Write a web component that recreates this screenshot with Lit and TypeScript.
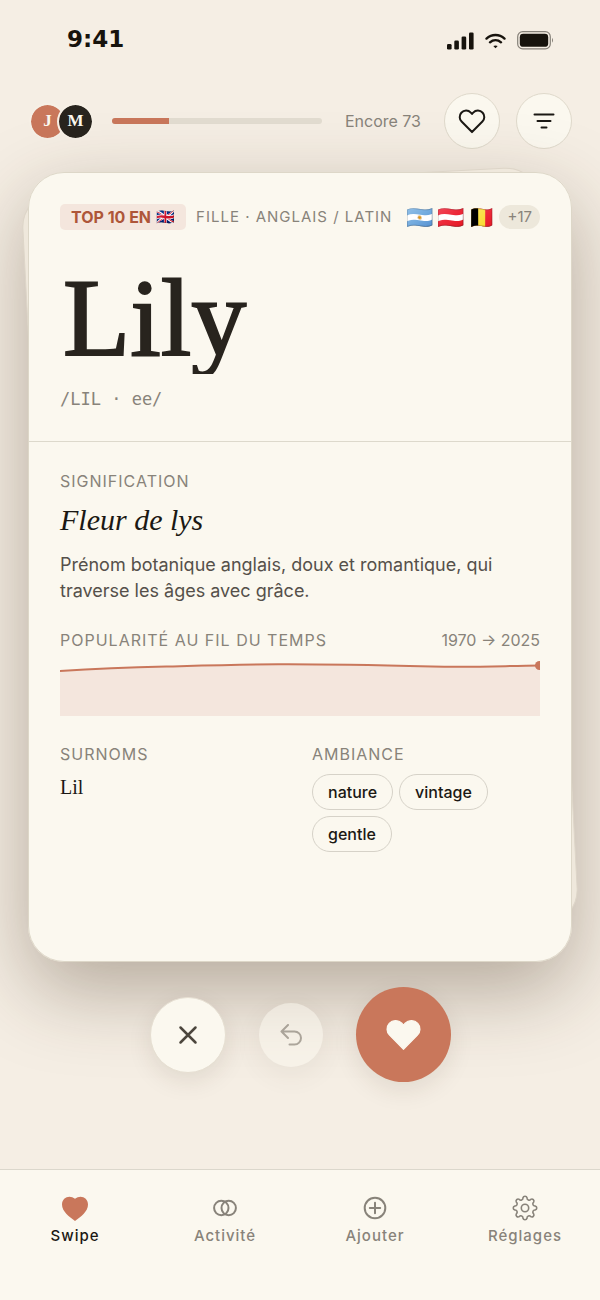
import { LitElement, html, css, svg } from "lit";
import { customElement, property } from "lit/decorators.js";

const heart = svg`<path d="M12 20.3 4.2 12.4C2.4 10.6 2.3 7.7 4 5.8 5.9 3.7 9.2 3.7 11.1 5.7L12 6.7 12.9 5.7C14.8 3.7 18.1 3.7 20 5.8 21.7 7.7 21.6 10.6 19.8 12.4Z" />`;

// Outline of a gear with eight rounded teeth, centred on (14, 14).
function gearPath(): string {
  const radius = 10.4;
  const step = Math.PI / 8;
  const point = (i: number) => {
    const a = -Math.PI / 2 - step / 2 + i * step;
    return `${(14 + radius * Math.cos(a)).toFixed(2)} ${(14 + radius * Math.sin(a)).toFixed(2)}`;
  };
  let d = `M${point(0)}`;
  for (let i = 1; i <= 16; i++) d += `A2.1 2.1 0 0 ${i % 2} ${point(i)}`;
  return d + "Z";
}

const nameCard = {
  name: "Lily",
  sound: "/LIL · ee/",
  meaning: "Fleur de lys",
  about: "Prénom botanique anglais, doux et romantique, qui traverse les âges avec grâce.",
  flags: ["🇦🇷", "🇦🇹", "🇧🇪"],
  nicknames: ["Lil"],
  moods: ["nature", "vintage", "gentle"],
};

const shared = css`
  * { box-sizing: border-box; margin: 0; }
  svg { display: block; fill: none; stroke: currentColor; stroke-linecap: round; stroke-linejoin: round; }
  button { font: inherit; color: inherit; padding: 0; cursor: pointer; }
`;

@customElement("status-bar")
export class StatusBar extends LitElement {
  static styles = [shared, css`
    :host { display: flex; align-items: center; justify-content: space-between; padding: 24px 46px 0 67px; color: #17130d; }
    .time { font: 700 23px/30px "DejaVu Sans", sans-serif; }
    .signals { display: flex; align-items: center; gap: 11px; padding-top: 3px; }
    .solid { fill: currentColor; stroke: none; }
  `];
  render() {
    return html`
      <span class="time">9:41</span>
      <div class="signals">
        <svg class="solid" width="27" height="18" viewBox="0 0 27 18">
          <rect x="0" y="12" width="4.6" height="5.5" rx="1.3" />
          <rect x="7.3" y="8.5" width="4.6" height="9" rx="1.3" />
          <rect x="14.6" y="4.5" width="4.6" height="13" rx="1.3" />
          <rect x="22" y="0.5" width="4.6" height="17" rx="1.3" />
        </svg>
        <svg width="21" height="16" viewBox="0 0 21 16" stroke-width="2.4">
          <path d="M1.5 5.6C6.6 0.8 14.4 0.8 19.5 5.6M5 9.3C8.2 6.4 12.8 6.4 16 9.3" />
          <path class="solid" d="M8.3 13Q10.5 11.8 12.7 13L10.5 15.2Z" />
        </svg>
        <svg width="37" height="19" viewBox="0 0 37 19">
          <rect x="0.7" y="0.7" width="32.6" height="17.2" rx="5" stroke-width="1.2" opacity=".5" />
          <rect class="solid" x="2.8" y="2.8" width="28.4" height="13" rx="3.4" />
          <path class="solid" d="M35 6.8Q37 9.3 35 11.8Z" opacity=".5" />
        </svg>
      </div>`;
  }
}

@customElement("deck-header")
export class DeckHeader extends LitElement {
  @property({ type: Number }) seen = 27;
  static styles = [shared, css`
    :host { display: flex; align-items: center; padding: 0 28px 0 29px; }
    .pair { display: flex; margin-right: 18px; }
    .avatar { width: 37px; height: 37px; border: 2px solid #f6f0e6; border-radius: 50%; display: grid; place-items: center; background: #c9775b; color: #fbf8ef; font: 700 17px/20px "Liberation Serif", serif; background-clip: padding-box; }
    .avatar + .avatar { margin-left: -9px; background-color: #28241e; }
    .track { flex: 1; height: 6px; border-radius: 3px; background: #e2dcd0; overflow: hidden; }
    .fill { height: 100%; background: #c9775b; }
    .left { margin: 0 23px; font-size: 16px; line-height: 24px; color: #88837a; }
    .round { width: 56px; height: 56px; border: 1px solid #dfd9cb; border-radius: 50%; background: #fbf8ef; display: grid; place-items: center; color: #1b1814; }
    .round + .round { margin-left: 16px; }
  `];
  render() {
    return html`
      <div class="pair"><span class="avatar">J</span><span class="avatar">M</span></div>
      <div class="track" role="progressbar" aria-valuenow=${this.seen} aria-label="Progression"><div class="fill" style="width:${this.seen}%"></div></div>
      <span class="left">Encore 73</span>
      <button class="round" aria-label="Favoris"><svg width="32" height="32" viewBox="0 0 24 24" stroke-width="1.5">${heart}</svg></button>
      <button class="round" aria-label="Filtres"><svg width="22" height="16" viewBox="0 0 22 16" stroke-width="2"><path d="M1.5 1.5H20.5M4.5 8H17.5M8.5 14.5H13.5" /></svg></button>`;
  }
}

@customElement("name-card")
export class NameCard extends LitElement {
  static styles = [shared, css`
    :host { display: flex; position: relative; flex: 1; }
    .shade { position: absolute; inset: 0; border-radius: 36px; box-shadow: 0 28px 80px rgba(60, 40, 20, 0.35); }
    .under { position: absolute; inset: 7px 12px 24px; border-radius: 36px; border: 1px solid #ddd5c8; background: #efe8dc; transform: rotate(-3deg); }
    .card { position: relative; flex: 1; border: 1px solid #ddd7c8; border-radius: 36px; background: #fbf8ef; }
    .top { padding: 31px 31px 29px; border-bottom: 1px solid #ddd9cc; }
    .facts { display: flex; align-items: center; height: 26px; color: #88837a; }
    .badge { display: flex; align-items: center; gap: 5px; padding: 0 11px; height: 26px; border-radius: 5px; background: #f4e6dd; color: #ae5639; font-size: 16px; line-height: 26px; font-weight: 700; white-space: nowrap; }
    .mini { font-size: 15px; }
    .kind { margin-left: 10px; font-size: 15px; line-height: 26px; letter-spacing: 1px; white-space: nowrap; }
    .flags { display: flex; margin-left: auto; gap: 4px; font-size: 22px; line-height: 26px; }
    .more { margin-left: 4px; padding: 0 8px; border-radius: 12px; background: #ede8db; font-size: 15px; line-height: 24px; }
    h1 { margin-top: 32px; padding-left: 3px; font: 400 110px/112px "Liberation Serif", serif; color: #28241e; -webkit-text-stroke: 2px #28241e; overflow: hidden; }
    .sound { margin-top: 12px; font: 17px/26px "DejaVu Sans Mono", monospace; color: #88837a; }
    .body { padding: 27px 31px; }
    h2 { font-size: 16px; line-height: 24px; font-weight: 400; letter-spacing: 1px; color: #88837a; }
    .meaning { margin-top: 9px; font: italic 30px/36px "Liberation Serif", serif; color: #1b1814; }
    .about { margin-top: 14px; font-size: 18px; line-height: 26px; color: #55504a; }
    .row { display: flex; justify-content: space-between; margin-top: 24px; }
    .years { font-size: 16px; line-height: 24px; color: #88837a; }
    .chart { width: 100%; height: 56px; margin-top: 8px; overflow: hidden; }
    .cols { display: grid; grid-template-columns: 1fr 1fr; gap: 24px; margin-top: 26px; }
    .nick { margin-top: 9px; font: 20px/24px "Liberation Serif", serif; color: #1b1814; }
    .moods { display: flex; flex-wrap: wrap; gap: 6px; margin-top: 8px; list-style: none; padding: 0; }
    .mood { padding: 0 15px; border: 1px solid #d6d2c8; border-radius: 18px; font-size: 16px; line-height: 34px; font-weight: 500; color: #1b1814; }
  `];
  render() {
    const c = nameCard;
    return html`
      <div class="shade"></div>
      <div class="under"></div>
      <article class="card">
        <div class="top">
          <div class="facts">
            <span class="badge">TOP 10 EN <span class="mini">🇬🇧</span></span>
            <span class="kind">FILLE · ANGLAIS / LATIN</span>
            <span class="flags">${c.flags.map((f) => html`<span>${f}</span>`)}</span>
            <span class="more">+17</span>
          </div>
          <h1>${c.name}</h1>
          <p class="sound">${c.sound}</p>
        </div>
        <div class="body">
          <h2>SIGNIFICATION</h2>
          <p class="meaning">${c.meaning}</p>
          <p class="about">${c.about}</p>
          <div class="row"><h2>POPULARITÉ AU FIL DU TEMPS</h2><span class="years">1970 → 2025</span></div>
          <svg class="chart" viewBox="0 0 480 56" preserveAspectRatio="none">
            <path d="M0 11C50 8 70 7.5 108 6.5S180 4.5 218 4.3 330 5.5 372 6.5 440 6 480 5.5V56H0Z" fill="#f4e6dd" stroke="none" />
            <path d="M0 11C50 8 70 7.5 108 6.5S180 4.5 218 4.3 330 5.5 372 6.5 440 6 480 5.5" stroke="#c9775b" stroke-width="2" />
            <circle cx="479.5" cy="5.5" r="4.5" fill="#c9775b" stroke="none" />
          </svg>
          <div class="cols">
            <section><h2>SURNOMS</h2><p class="nick">${c.nicknames.join(", ")}</p></section>
            <section><h2>AMBIANCE</h2><ul class="moods">${c.moods.map((m) => html`<li class="mood">${m}</li>`)}</ul></section>
          </div>
        </div>
      </article>`;
  }
}

@customElement("swipe-actions")
export class SwipeActions extends LitElement {
  static styles = [shared, css`
    :host { position: relative; display: flex; align-items: center; justify-content: center; gap: 33px; padding: 25px 0 87px; }
    button { display: grid; place-items: center; border-radius: 50%; border: 0; background: #fbf8ef; box-shadow: 0 8px 24px rgba(60, 40, 20, 0.1); }
    .pass { width: 76px; height: 76px; border: 1px solid #e6dfd2; color: #4c463d; }
    .undo { width: 64px; height: 64px; color: #6b655b; opacity: 0.5; }
    .like { width: 95px; height: 95px; background: #c9775b; color: #fbf8ef; }
    .like svg { fill: currentColor; }
  `];
  render() {
    return html`
      <button class="pass" aria-label="Passer"><svg width="20" height="20" viewBox="0 0 20 20" stroke-width="2.5"><path d="M2.5 2.5 17.5 17.5M17.5 2.5 2.5 17.5" /></svg></button>
      <button class="undo" aria-label="Annuler"><svg width="22" height="22" viewBox="0 0 22 22" stroke-width="2"><path d="M8 1 1.5 7.5 8 14M1.5 7.5H14.5A6.2 6.2 0 0 1 14.5 20.5H9.5" /></svg></button>
      <button class="like" aria-label="Aimer"><svg width="43" height="43" viewBox="0 0 24 24" stroke-width="0.6">${heart}</svg></button>`;
  }
}

@customElement("tab-bar")
export class TabBar extends LitElement {
  static styles = [shared, css`
    :host { position: relative; display: block; border-top: 1px solid #dbd7cc; background: #fbf8ef; }
    nav { display: grid; grid-template-columns: repeat(4, 1fr); padding: 24px 0 52px; }
    a { display: grid; justify-items: center; gap: 2px; color: #88837a; text-decoration: none; font-size: 15px; line-height: 24px; font-weight: 500; letter-spacing: 1px; }
    a svg { width: 28px; height: 28px; }
    .on { color: #1b1814; }
    .on svg { fill: #c9775b; stroke: none; }
  `];
  render() {
    return html`<nav>
      <a class="on" href="#swipe" aria-current="page"><svg viewBox="0 0 28 28"><path d="M14 27C8 22.5 1 17.5 1 10.5 1 3 9 .5 14 4.8 19 .5 27 3 27 10.5 27 17.5 20 22.5 14 27Z" /></svg>Swipe</a>
      <a href="#activite"><svg viewBox="0 0 28 28" stroke-width="2"><circle cx="10.3" cy="14" r="7.2" /><circle cx="17.7" cy="14" r="7.2" /></svg>Activité</a>
      <a href="#ajouter"><svg viewBox="0 0 28 28" stroke-width="2"><circle cx="14" cy="14" r="10.3" /><path d="M14 8.8V19.2M8.8 14H19.2" /></svg>Ajouter</a>
      <a href="#reglages"><svg viewBox="0 0 28 28" stroke-width="1.6"><path d=${gearPath()} /><circle cx="14" cy="14" r="3.7" /></svg>Réglages</a>
    </nav>`;
  }
}

@customElement("app-root")
export class AppRoot extends LitElement {
  static styles = [shared, css`
    :host { display: flex; flex-direction: column; min-height: 100vh; overflow: hidden; background: #f5eee4; font-family: Inter, "Noto Sans", sans-serif; }
    deck-header { padding-top: 39px; }
    main { flex: 1; display: flex; flex-direction: column; padding: 23px 28px 0; }
  `];
  render() {
    return html`
      <status-bar></status-bar>
      <deck-header></deck-header>
      <main><name-card></name-card><swipe-actions></swipe-actions></main>
      <tab-bar></tab-bar>`;
  }
}
